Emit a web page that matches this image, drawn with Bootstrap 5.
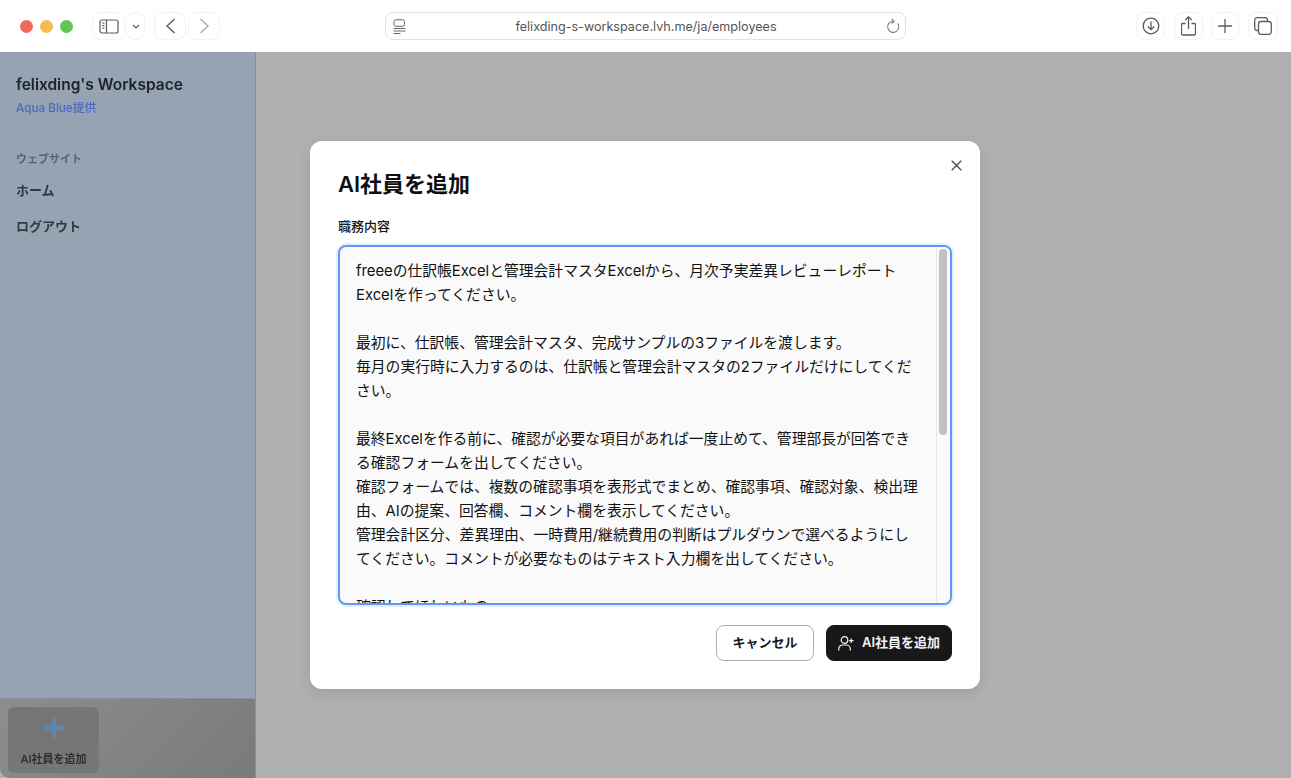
<!DOCTYPE html>
<html lang="ja">
<head>
  <meta charset="UTF-8" />
  <title>AI社員を追加</title>
  <meta name="viewport" content="width=device-width, initial-scale=1" />
  <link href="https://cdn.jsdelivr.net/npm/bootstrap@5.3.0/dist/css/bootstrap.min.css" rel="stylesheet" />
  <style>
    html, body {
      height: 100%;
      overflow: hidden;
    }
    body {
      background-color: #fff;
      font-family: Inter, "Noto Sans CJK JP", sans-serif;
      color: #18181b;
    }
    /* browser chrome */
    .chrome-bar {
      height: 52px;
      display: grid;
      grid-template-columns: 1fr 521px 1fr;
      align-items: center;
    }
    .traffic-group {
      gap: 7px;
      margin: 0 19px 0 20px;
    }
    .traffic {
      width: 13px;
      height: 13px;
      border-radius: 50%;
    }
    .traffic-red { background-color: #ee6a5f; }
    .traffic-yellow { background-color: #f5bd4f; }
    .traffic-green { background-color: #61c454; }
    .tool-btn {
      height: 28px;
      border: 1px solid #f3f3f3;
      border-radius: 8px;
      color: #5c5c5c;
    }
    .tool-off { color: #ababab; }
    .w-sidebar { width: 33px; }
    .w-chevron { width: 19px; margin-left: 1px; }
    .w-back { width: 32px; margin-left: 9px; }
    .w-forward { width: 32px; margin-left: 2px; }
    .tools-right { padding-right: 13px; }
    .w-download { width: 29px; }
    .w-share { width: 29px; margin-left: 9px; }
    .w-plus { width: 28px; margin-left: 8px; }
    .w-tabs { width: 30px; margin-left: 9px; }
    .address-bar {
      height: 28px;
      border: 1px solid #e2e2e2;
      border-radius: 8px;
      font-size: 12.6px;
      color: #555;
      padding: 0 5px 0 7px;
    }
    .address-text {
      padding-top: 2px;
    }
    /* page behind the dialog */
    .page-area {
      height: 726px;
      background-color: #b0b0b0;
    }
    .side-panel {
      width: 256px;
      background-color: #95a3b3;
      border-right: 1px solid #8d8f92;
      border-bottom-left-radius: 10px;
      overflow: hidden;
    }
    .side-blur {
      filter: blur(.7px);
    }
    .side-top {
      padding-top: 21px;
    }
    .side-title {
      font-size: 15.5px;
      font-weight: 600;
      line-height: 24px;
      color: #1e2126;
    }
    .side-sub {
      font-size: 11.7px;
      font-weight: 500;
      line-height: 16px;
      margin-top: 3px;
      color: #4d66c2;
    }
    .side-head {
      font-size: 11px;
      font-weight: 600;
      line-height: 16px;
      margin-top: 35px;
      color: #5a626c;
    }
    .side-link {
      font-size: 13px;
      font-weight: 600;
      line-height: 20px;
      color: #34383e;
      margin-top: 16px;
    }
    .side-head + .side-link {
      margin-top: 13px;
    }
    .side-foot {
      height: 80px;
      padding: 8px 8px 5px;
      background: linear-gradient(135deg, #8d8d8d, #7a7a7a);
      border-top: 1px solid #85909b;
    }
    .add-tile {
      width: 91px;
      height: 66px;
      border-radius: 6px;
      padding: 10px 0 6px;
      background-color: #767676;
      font-size: 11px;
      font-weight: 600;
      line-height: 16px;
      color: #2f2f2f;
    }
    /* dialog */
    .dialog-layer {
      top: 52px;
      left: 0;
      right: 1px;
      bottom: 0;
    }
    .dialog-box {
      width: 670px;
      height: 548px;
      background-color: #fff;
      border-radius: 12px;
      padding: 27px 28px 28px;
      box-shadow: 0 4px 14px rgba(0, 0, 0, .1);
    }
    .dialog-title {
      font-size: 22px;
      font-weight: 600;
      line-height: 32px;
      margin-bottom: 16px;
      color: #0f0f11;
    }
    .dialog-label {
      font-size: 13px;
      font-weight: 500;
      line-height: 20px;
      margin-bottom: 9px;
      display: block;
    }
    .close-x {
      top: 14px;
      right: 14px;
      width: 20px;
      height: 20px;
      color: #4a4a4a;
      background: none;
      border: 0;
      padding: 0;
    }
    .text-wrap-box {
      height: 360px;
    }
    .job-text {
      height: 360px;
      resize: none;
      font-family: Inter, "Noto Sans CJK JP", sans-serif;
      font-size: 14.8px;
      line-height: 24px;
      padding: 12px 28px 12px 16px;
      color: #111113;
      background-color: #fafafa;
      border: 2px solid #6496f2;
      border-radius: 8px;
      box-shadow: 0 0 0 2px #e6eefc;
      overflow: hidden;
    }
    .job-text:focus {
      background-color: #fafafa;
      border-color: #6496f2;
      box-shadow: 0 0 0 2px #e6eefc;
    }
    .scroll-track {
      top: 2px;
      right: 2px;
      bottom: 2px;
      width: 14px;
      background-color: #fafafa;
      border-left: 1px solid #e8e8e8;
      border-radius: 0 6px 6px 0;
    }
    .scroll-thumb {
      top: 2px;
      left: 2px;
      width: 8px;
      height: 186px;
      border-radius: 4px;
      background-color: #c1c1c1;
    }
    .dialog-actions {
      gap: 12px;
    }
    .btn-cancel, .btn-add {
      height: 36px;
      font-size: 13px;
      font-weight: 600;
      border-radius: 8px;
      padding: 0;
    }
    .btn-cancel {
      width: 98px;
      background-color: #fff;
      border: 1px solid #aeaeae;
      color: #18181b;
    }
    .btn-add {
      width: 126px;
      background-color: #18181b;
      border: 1px solid #18181b;
      color: #f4f4f4;
    }
  </style>
</head>
<body class="position-relative">

<div class="chrome-bar">
  <div class="d-flex align-items-center">
    <div class="traffic-group d-flex align-items-center">
      <span class="traffic traffic-red"></span>
      <span class="traffic traffic-yellow"></span>
      <span class="traffic traffic-green"></span>
    </div>
    <div class="tool-btn w-sidebar d-flex align-items-center justify-content-center">
      <svg width="20" height="15" viewBox="0 0 20 15" fill="none" stroke="currentColor" stroke-width="1.2"><rect x="1" y="1" width="18" height="13" rx="2"/><path d="M7.500 1v13"/><path d="M3 4h2.500M3 6.500h2.500M3 9h2.500" stroke-width="1"/></svg>
    </div>
    <div class="tool-btn w-chevron d-flex align-items-center justify-content-center">
      <svg width="8" height="5" viewBox="0 0 8 5" fill="none" stroke="currentColor" stroke-width="1.2"><path d="M1 1l3 3 3-3"/></svg>
    </div>
    <div class="tool-btn w-back d-flex align-items-center justify-content-center">
      <svg width="11" height="16" viewBox="0 0 11 16" fill="none" stroke="currentColor" stroke-width="1.4"><path d="M9.500 1L2 8l7.500 7"/></svg>
    </div>
    <div class="tool-btn tool-off w-forward d-flex align-items-center justify-content-center">
      <svg width="11" height="16" viewBox="0 0 11 16" fill="none" stroke="currentColor" stroke-width="1.4"><path d="M1.500 1L9 8l-7.500 7"/></svg>
    </div>
  </div>
  <div class="address-bar d-flex align-items-center justify-content-between">
    <svg width="13" height="15" viewBox="0 0 13 15" fill="none" stroke="#666" stroke-width="1"><rect x="1" y=".8" width="10.500" height="6.500" rx="1.800"/><path d="M.5 9.500h12M.5 12h12M.5 14.500h7"/></svg>
    <span class="address-text">felixding-s-workspace.lvh.me/ja/employees</span>
    <svg width="14" height="16" viewBox="0 0 14 16" fill="none" stroke="#777" stroke-width="1.1"><path d="M11.600 5.300A5.600 5.600 0 1 1 7 3.200"/><path d="M5.600.8L8 3.200 5.600 5.600"/></svg>
  </div>
  <div class="tools-right d-flex align-items-center justify-content-end">
    <div class="tool-btn w-download d-flex align-items-center justify-content-center">
      <svg width="18" height="18" viewBox="0 0 18 18" fill="none" stroke="currentColor" stroke-width="1.3"><circle cx="9" cy="9" r="7.800"/><path d="M9 4.500v8M5.800 9.500L9 12.700l3.200-3.200"/></svg>
    </div>
    <div class="tool-btn w-share d-flex align-items-center justify-content-center">
      <svg width="15" height="20" viewBox="0 0 15 20" fill="none" stroke="currentColor" stroke-width="1.3"><path d="M4.500 7.500H1.500a1 1 0 0 0-1 1v9.500a1 1 0 0 0 1 1h12a1 1 0 0 0 1-1V8.500a1 1 0 0 0-1-1h-3"/><path d="M7.500 13V1M4.300 4l3.200-3.200L10.700 4"/></svg>
    </div>
    <div class="tool-btn w-plus d-flex align-items-center justify-content-center">
      <svg width="14" height="14" viewBox="0 0 14 14" fill="none" stroke="currentColor" stroke-width="1.3"><path d="M7 0v14M0 7h14"/></svg>
    </div>
    <div class="tool-btn w-tabs d-flex align-items-center justify-content-center">
      <svg width="18" height="18" viewBox="0 0 18 18" fill="none" stroke="currentColor" stroke-width="1.3"><rect x="4.500" y="4.500" width="12.800" height="12.800" rx="2.500"/><path d="M4.500 13.500H3a2.300 2.300 0 0 1-2.300-2.300V3A2.300 2.300 0 0 1 3 .7h8.200A2.300 2.300 0 0 1 13.500 3v1.500"/></svg>
    </div>
  </div>
</div>

<div class="page-area d-flex">
  <aside class="side-panel d-flex flex-column">
    <div class="side-blur side-top flex-grow-1 px-3">
      <div class="side-title">felixding's Workspace</div>
      <div class="side-sub">Aqua Blue提供</div>
      <div class="side-head">ウェブサイト</div>
      <div class="side-link">ホーム</div>
      <div class="side-link">ログアウト</div>
    </div>
    <div class="side-foot">
      <div class="add-tile side-blur d-flex flex-column align-items-center justify-content-between">
        <svg width="22" height="22" viewBox="0 0 22 22" fill="none" stroke="#5f85b8" stroke-width="4"><path d="M11 1v20M1 11h20"/></svg>
        <span>AI社員を追加</span>
      </div>
    </div>
  </aside>
</div>

<div class="dialog-layer position-absolute d-flex align-items-center justify-content-center">
  <div class="dialog-box position-relative d-flex flex-column">
    <button type="button" class="close-x position-absolute d-flex align-items-center justify-content-center" aria-label="閉じる">
      <svg width="11" height="11" viewBox="0 0 11 11" fill="none" stroke="currentColor" stroke-width="1.3"><path d="M.7.7l9.600 9.600M10.300.7L.7 10.300"/></svg>
    </button>
    <div class="dialog-title">AI社員を追加</div>
    <label class="dialog-label" for="jobText">職務内容</label>
    <div class="text-wrap-box position-relative">
      <textarea id="jobText" class="form-control job-text">freeeの仕訳帳Excelと管理会計マスタExcelから、月次予実差異レビューレポートExcelを作ってください。

最初に、仕訳帳、管理会計マスタ、完成サンプルの3ファイルを渡します。
毎月の実行時に入力するのは、仕訳帳と管理会計マスタの2ファイルだけにしてください。

最終Excelを作る前に、確認が必要な項目があれば一度止めて、管理部長が回答できる確認フォームを出してください。
確認フォームでは、複数の確認事項を表形式でまとめ、確認事項、確認対象、検出理由、AIの提案、回答欄、コメント欄を表示してください。
管理会計区分、差異理由、一時費用/継続費用の判断はプルダウンで選べるようにしてください。コメントが必要なものはテキスト入力欄を出してください。

確認してほしいもの
</textarea>
      <div class="scroll-track position-absolute">
        <div class="scroll-thumb position-absolute"></div>
      </div>
    </div>
    <div class="dialog-actions d-flex justify-content-end mt-auto">
      <button type="button" class="btn btn-cancel">キャンセル</button>
      <button type="button" class="btn btn-add d-flex align-items-center justify-content-center gap-2">
        <svg width="16" height="15" viewBox="0 0 16 15" fill="none" stroke="currentColor" stroke-width="1.2"><circle cx="6.500" cy="4" r="3.300"/><path d="M.7 14.500v-1.500a4 4 0 0 1 4-4h3.600a4 4 0 0 1 4 4v1.500"/><path d="M13.200 2.500v4.500M11 4.700h4.500"/></svg>
        <span>AI社員を追加</span>
      </button>
    </div>
  </div>
</div>

<script src="https://cdn.jsdelivr.net/npm/bootstrap@5.3.0/dist/js/bootstrap.bundle.min.js"></script>
</body>
</html>
